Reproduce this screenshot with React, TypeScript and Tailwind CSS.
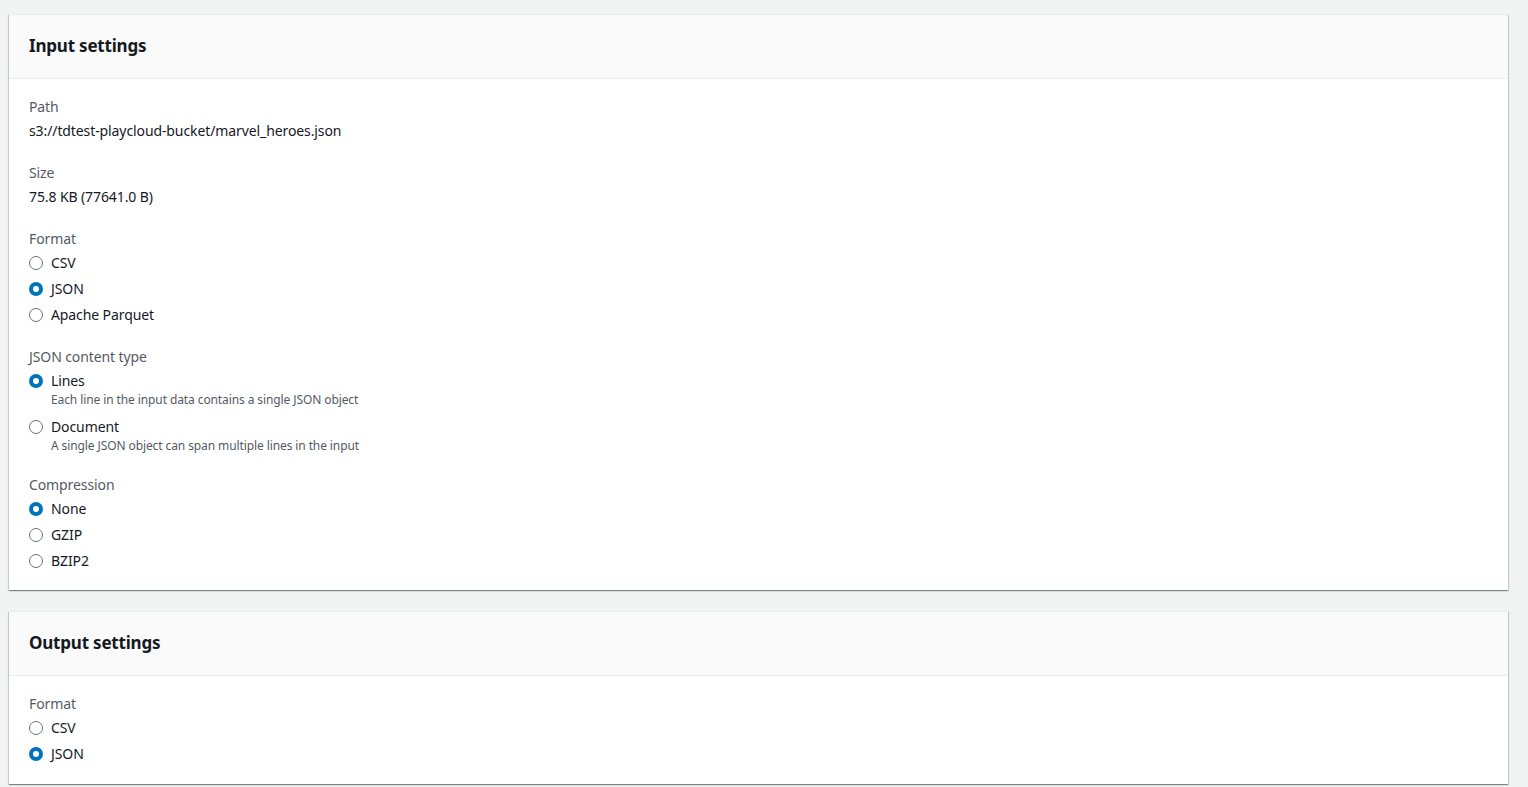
import React from "react";

type Option = { label: string; description?: string; checked?: boolean };

const Radio = ({ checked }: { checked?: boolean }) =>
  checked ? (
    <span className="w-[14px] h-[14px] rounded-full border-[4.5px] border-[#0073bb] bg-white shrink-0" />
  ) : (
    <span className="w-[14px] h-[14px] rounded-full border-[1.5px] border-[#687078] bg-white shrink-0" />
  );

const RadioGroup = ({ options }: { options: Option[] }) => {
  const hasDesc = options.some((o) => o.description);
  return (
    <div className={hasDesc ? "flex flex-col gap-2 pt-px pb-px" : "flex flex-col gap-0.5"}>
      {options.map((o) => (
        <div key={o.label} className="flex flex-col">
          <div className={`flex items-center gap-[8px] ${hasDesc ? "h-[22px]" : "h-6"}`}>
            <Radio checked={o.checked} />
            <span className="text-sm text-[#16191f]">{o.label}</span>
          </div>
          {o.description && (
            <div className="pl-[22px] text-xs leading-4 text-[#545b64]">{o.description}</div>
          )}
        </div>
      ))}
    </div>
  );
};

const Field = ({ label, children }: { label: string; children: React.ReactNode }) => (
  <div className="flex flex-col">
    <div className="h-6 leading-6 text-sm text-[#545b64]">{label}</div>
    {children}
  </div>
);

const Card = ({ title, children, pb }: { title: string; children: React.ReactNode; pb: string }) => (
  <div className="ml-[9px] w-[1499px] bg-white border-t border-[#eaeded] shadow-[0_1px_1px_0_rgba(0,28,36,0.3),1px_1px_1px_0_rgba(0,28,36,0.15),-1px_1px_1px_0_rgba(0,28,36,0.15)]">
    <div className="h-[64px] bg-[#fafafa] border-b border-[#eaeded] px-5 pb-[2px] flex items-center">
      <h2 className="text-[17px] font-bold text-[#16191f] tracking-[-0.2px]">{title}</h2>
    </div>
    <div className={`px-5 pt-4 ${pb} flex flex-col gap-[18px]`}>{children}</div>
  </div>
);

const App: React.FC = () => {
  return (
    <div
      className="min-h-[787px] bg-[#f2f3f3] pt-[14px] pb-1 flex flex-col gap-[21px] tracking-[-0.1px]"
      style={{ fontFamily: '"Noto Sans", "Open Sans", sans-serif' }}
    >
      <Card title="Input settings" pb="pb-[17px]">
        <Field label="Path">
          <div className="h-6 leading-6 text-sm text-[#16191f]">s3://tdtest-playcloud-bucket/marvel_heroes.json</div>
        </Field>
        <Field label="Size">
          <div className="h-6 leading-6 text-sm text-[#16191f]">75.8 KB (77641.0 B)</div>
        </Field>
        <Field label="Format">
          <RadioGroup
            options={[{ label: "CSV" }, { label: "JSON", checked: true }, { label: "Apache Parquet" }]}
          />
        </Field>
        <Field label="JSON content type">
          <RadioGroup
            options={[
              { label: "Lines", checked: true, description: "Each line in the input data contains a single JSON object" },
              { label: "Document", description: "A single JSON object can span multiple lines in the input" },
            ]}
          />
        </Field>
        <Field label="Compression">
          <RadioGroup options={[{ label: "None", checked: true }, { label: "GZIP" }, { label: "BZIP2" }]} />
        </Field>
      </Card>
      <Card title="Output settings" pb="pb-[18px]">
        <Field label="Format">
          <RadioGroup options={[{ label: "CSV" }, { label: "JSON", checked: true }]} />
        </Field>
      </Card>
    </div>
  );
};

export default App;
